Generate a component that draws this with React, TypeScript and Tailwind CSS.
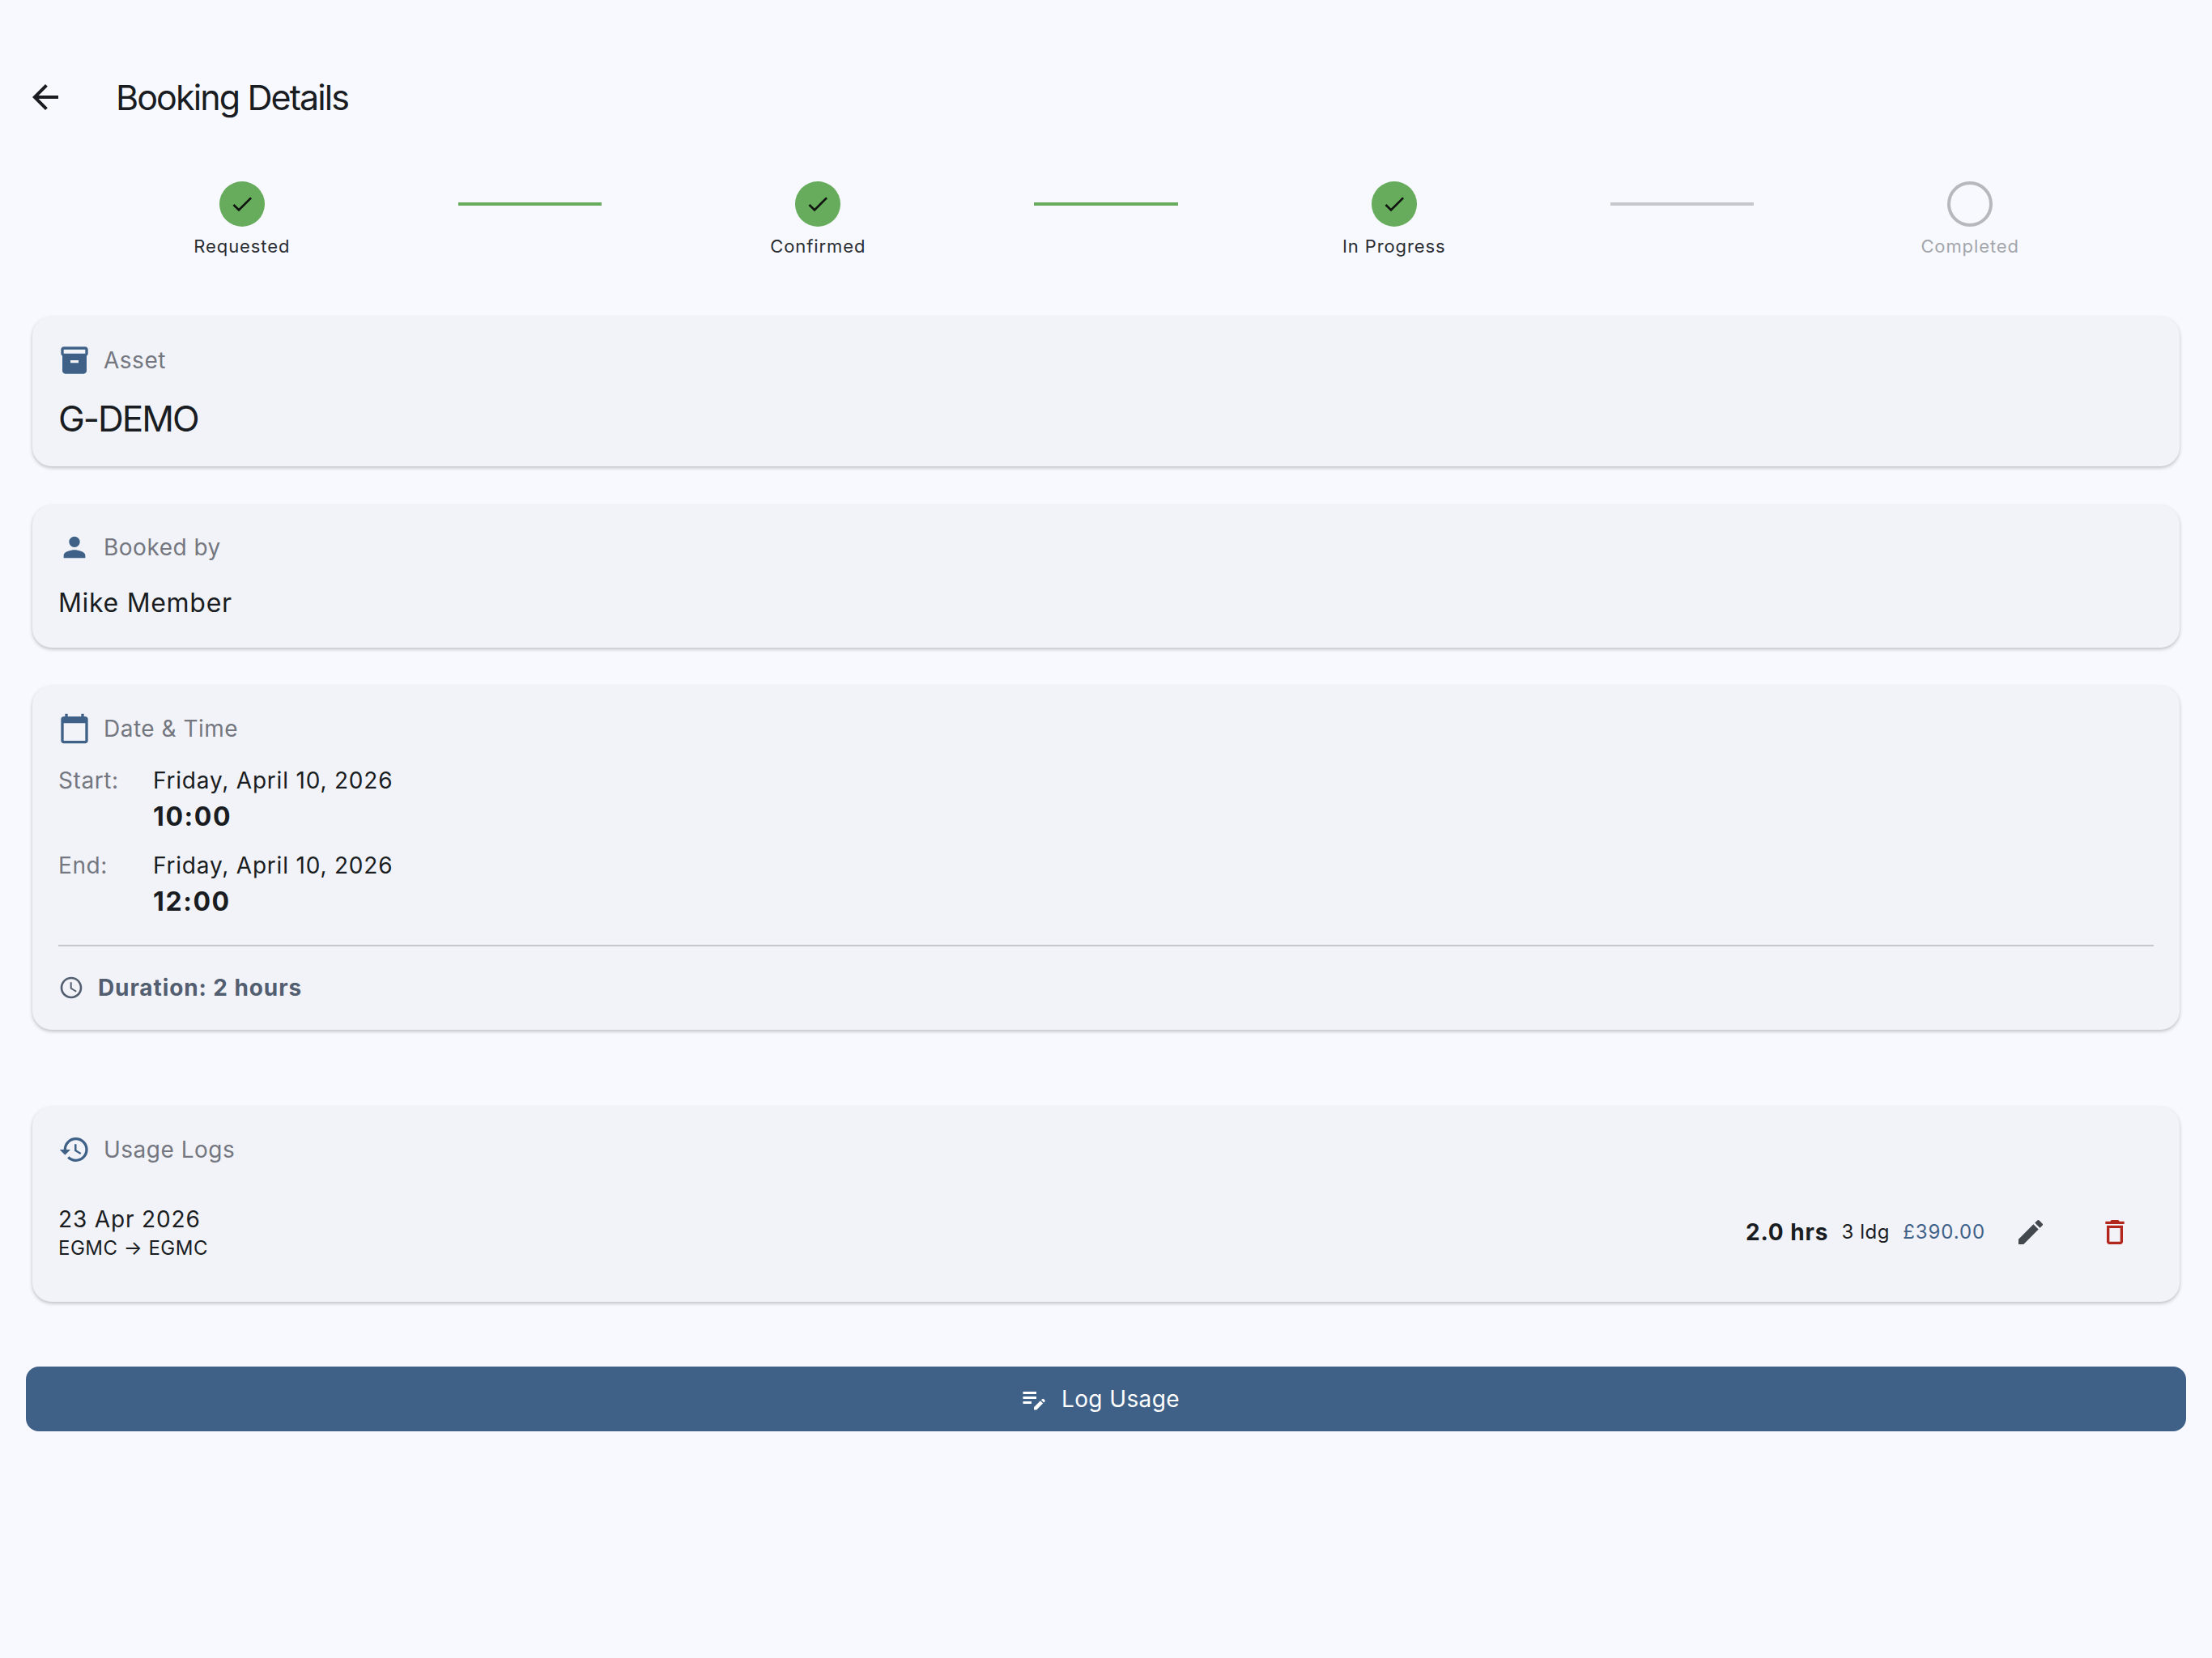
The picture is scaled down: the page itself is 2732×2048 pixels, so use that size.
import { ReactNode } from "react";
import {
  MdArrowBack,
  MdCalendarToday,
  MdCheck,
  MdDeleteOutline,
  MdEdit,
  MdEditNote,
  MdHistory,
  MdInventory2,
  MdOutlineAccessTime,
  MdPerson,
} from "react-icons/md";

const steps = [
  { label: "Requested", done: true },
  { label: "Confirmed", done: true },
  { label: "In Progress", done: true },
  { label: "Completed", done: false },
];

const Step = ({ label, done }: { label: string; done: boolean }) => (
  <div className="flex-[3] flex flex-col items-center">
    {done ? (
      <div className="w-14 h-14 rounded-full bg-[#66ac5c] flex items-center justify-center">
        <MdCheck className="w-8 h-8 text-[#10130f]" />
      </div>
    ) : (
      <div className="w-14 h-14 rounded-full border-[4px] border-[#b5b8bd]" />
    )}
    <span
      className={`mt-[9px] text-[22px] leading-[30px] tracking-[0.9px] ${
        done ? "text-[#2a2d31]" : "text-[#a3a6ab]"
      }`}
    >
      {label}
    </span>
  </div>
);

const Card = ({ className, children }: { className: string; children: ReactNode }) => (
  <div className={`rounded-3xl bg-[#f2f3f9] px-8 shadow-[0_2px_4px_rgba(0,0,0,0.24)] ${className}`}>
    {children}
  </div>
);

const CardLabel = ({ icon, children }: { icon: ReactNode; children: ReactNode }) => (
  <div className="flex items-center gap-4 h-10 text-[28px] tracking-[0.5px] text-[#74777f]">
    <span className="w-10 h-10 flex items-center justify-center text-[#3f6188]">{icon}</span>
    {children}
  </div>
);

const DateRow = ({ label, date, time }: { label: string; date: string; time: string }) => (
  <div className="flex">
    <span className="w-[117px] text-[28px] leading-[44px] tracking-[0.6px] text-[#74777f]">{label}</span>
    <div>
      <div className="text-[28px] leading-[44px] tracking-[0.8px] text-[#191c20]">{date}</div>
      <div className="text-[32px] leading-[46px] font-bold tracking-[1.6px] text-[#191c20]">{time}</div>
    </div>
  </div>
);

export default function App() {
  return (
    <div className="min-h-screen bg-[#f8f9ff] pt-16 [font-family:Inter,sans-serif]">
      <header className="h-28 flex items-center pl-10">
        <MdArrowBack className="w-12 h-12 -ml-2 text-[#191c20]" />
        <h1 className="ml-[63px] text-[43px] tracking-[-1.9px] text-[#191c20]">Booking Details</h1>
      </header>

      <div className="flex items-start px-8 pt-[48px]">
        {steps.map((s, i) => (
          <div key={s.label} className="contents">
            <Step label={s.label} done={s.done} />
            {i < steps.length - 1 && (
              <div className={`flex-1 h-1 mt-[26px] ${steps[i + 1].done ? "bg-[#66ac5c]" : "bg-[#c4c7cc]"}`} />
            )}
          </div>
        ))}
      </div>

      <div className="px-10 pt-[72px]">
        <Card className="h-[185px] pt-[34px]">
          <CardLabel icon={<MdInventory2 className="w-10 h-10" />}>Asset</CardLabel>
          <div className="mt-[19px] text-[44px] leading-[66px] tracking-[-2px] text-[#191c20]">G-DEMO</div>
        </Card>

        <Card className="h-[176px] mt-12 pt-[32px]">
          <CardLabel icon={<MdPerson className="w-10 h-10" />}>Booked by</CardLabel>
          <div className="mt-[25px] text-[32px] leading-[48px] tracking-[0.7px] text-[#191c20]">Mike Member</div>
        </Card>

        <Card className="h-[425px] mt-[47px] pt-[33px]">
          <CardLabel icon={<MdCalendarToday className="w-10 h-10" />}>Date &amp; Time</CardLabel>
          <div className="mt-[22px] flex flex-col gap-[15px]">
            <DateRow label="Start:" date="Friday, April 10, 2026" time="10:00" />
            <DateRow label="End:" date="Friday, April 10, 2026" time="12:00" />
          </div>
          <div className="h-0.5 bg-[#c3c7cf] mt-[30px]" />
          <div className="flex items-center gap-[17px] mt-[33px] text-[28px] leading-[36px] font-bold tracking-[0.9px] text-[#535f70]">
            <MdOutlineAccessTime className="w-8 h-8" />
            Duration: 2 hours
          </div>
        </Card>

        <Card className="h-[241px] mt-[95px] pt-[33px]">
          <CardLabel icon={<MdHistory className="w-10 h-10" />}>Usage Logs</CardLabel>
          <div className="flex items-center mt-[44px]">
            <div className="flex-1 pt-[3px]">
              <div className="text-[28px] leading-[38px] tracking-[0.85px] text-[#191c20]">23 Apr 2026</div>
              <div className="text-[24px] leading-[34px] tracking-[0.5px] text-[#191c20]">EGMC → EGMC</div>
            </div>
            <span className="text-[28px] font-bold tracking-[0.9px] text-[#191c20]">2.0 hrs</span>
            <span className="ml-4 text-[24px] tracking-[0.6px] text-[#191c20]">3 ldg</span>
            <span className="ml-4 text-[24px] tracking-[0.9px] text-[#3f6188]">£390.00</span>
            <MdEdit className="ml-[36px] w-10 h-10 text-[#43474e]" />
            <MdDeleteOutline className="ml-[64px] mr-[28px] w-10 h-10 text-[#b3261e]" />
          </div>
        </Card>
      </div>

      <div className="px-8 pt-20">
        <button className="w-full h-20 pr-4 rounded-2xl bg-[#3f6188] flex items-center justify-center gap-[16px] text-[28px] tracking-[0.4px] text-white">
          <MdEditNote className="w-9 h-9" />
          Log Usage
        </button>
      </div>
    </div>
  );
}
